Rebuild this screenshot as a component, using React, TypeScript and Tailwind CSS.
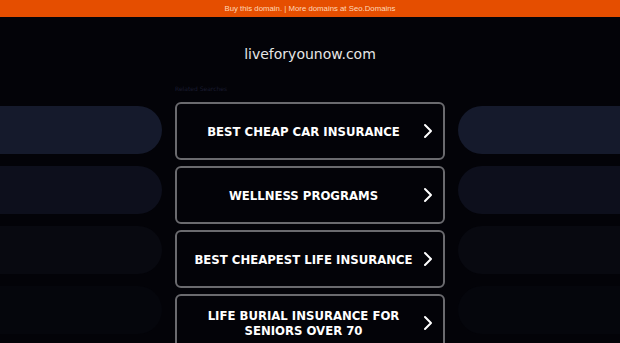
import { ChevronRight } from 'lucide-react'

const links = [
  'BEST CHEAP CAR INSURANCE',
  'WELLNESS PROGRAMS',
  'BEST CHEAPEST LIFE INSURANCE',
  'LIFE BURIAL INSURANCE FOR SENIORS OVER 70',
]

const pillColors = ['bg-[#151a2c]', 'bg-[#0d0f1c]', 'bg-[#080910]', 'bg-[#05060c]']

export default function App() {
  return (
    <div className="h-[343px] w-[620px] overflow-hidden bg-[#030308]">
      <div className="flex h-[17px] items-center justify-center bg-[#e54e00] font-['Liberation_Sans',Arial,sans-serif] text-[7.8px] text-[#ffd8b8]">
        Buy this domain. | More domains at Seo.Domains
      </div>

      <div className="flex h-[56px] items-center justify-center pt-[19px] font-['DejaVu_Sans',sans-serif] text-[14px] text-[#e6e6e6]">
        liveforyounow.com
      </div>

      <div className="flex gap-[13px]">
        <div className="flex w-[162px] flex-col gap-[12px] pt-[33px]">
          {pillColors.map((c) => (
            <div key={c} className={`h-[48px] w-full rounded-r-full ${c}`} />
          ))}
        </div>

        <div className="w-[270px]">
          <div className="h-[29px] pt-[13px] font-['DejaVu_Sans',sans-serif] text-[6px] leading-none text-[#1a1c30]">
            Related Searches
          </div>
          <div className="flex flex-col gap-[6px]">
            {links.map((l) => (
              <div
                key={l}
                className="flex h-[58px] items-center rounded-[6px] border-2 border-[#6a6a6e] bg-[#030308] pl-[14px] pr-[3px]"
              >
                <span className="flex-1 text-center font-['DejaVu_Sans_Condensed','DejaVu_Sans',sans-serif] text-[13px] font-bold leading-[15px] text-white">
                  {l}
                </span>
                <ChevronRight className="h-6 w-6 shrink-0 text-white" strokeWidth={2} />
              </div>
            ))}
          </div>
        </div>

        <div className="flex flex-1 flex-col gap-[12px] pt-[33px]">
          {pillColors.map((c) => (
            <div key={c} className={`h-[48px] w-full rounded-l-full ${c}`} />
          ))}
        </div>
      </div>
    </div>
  )
}
